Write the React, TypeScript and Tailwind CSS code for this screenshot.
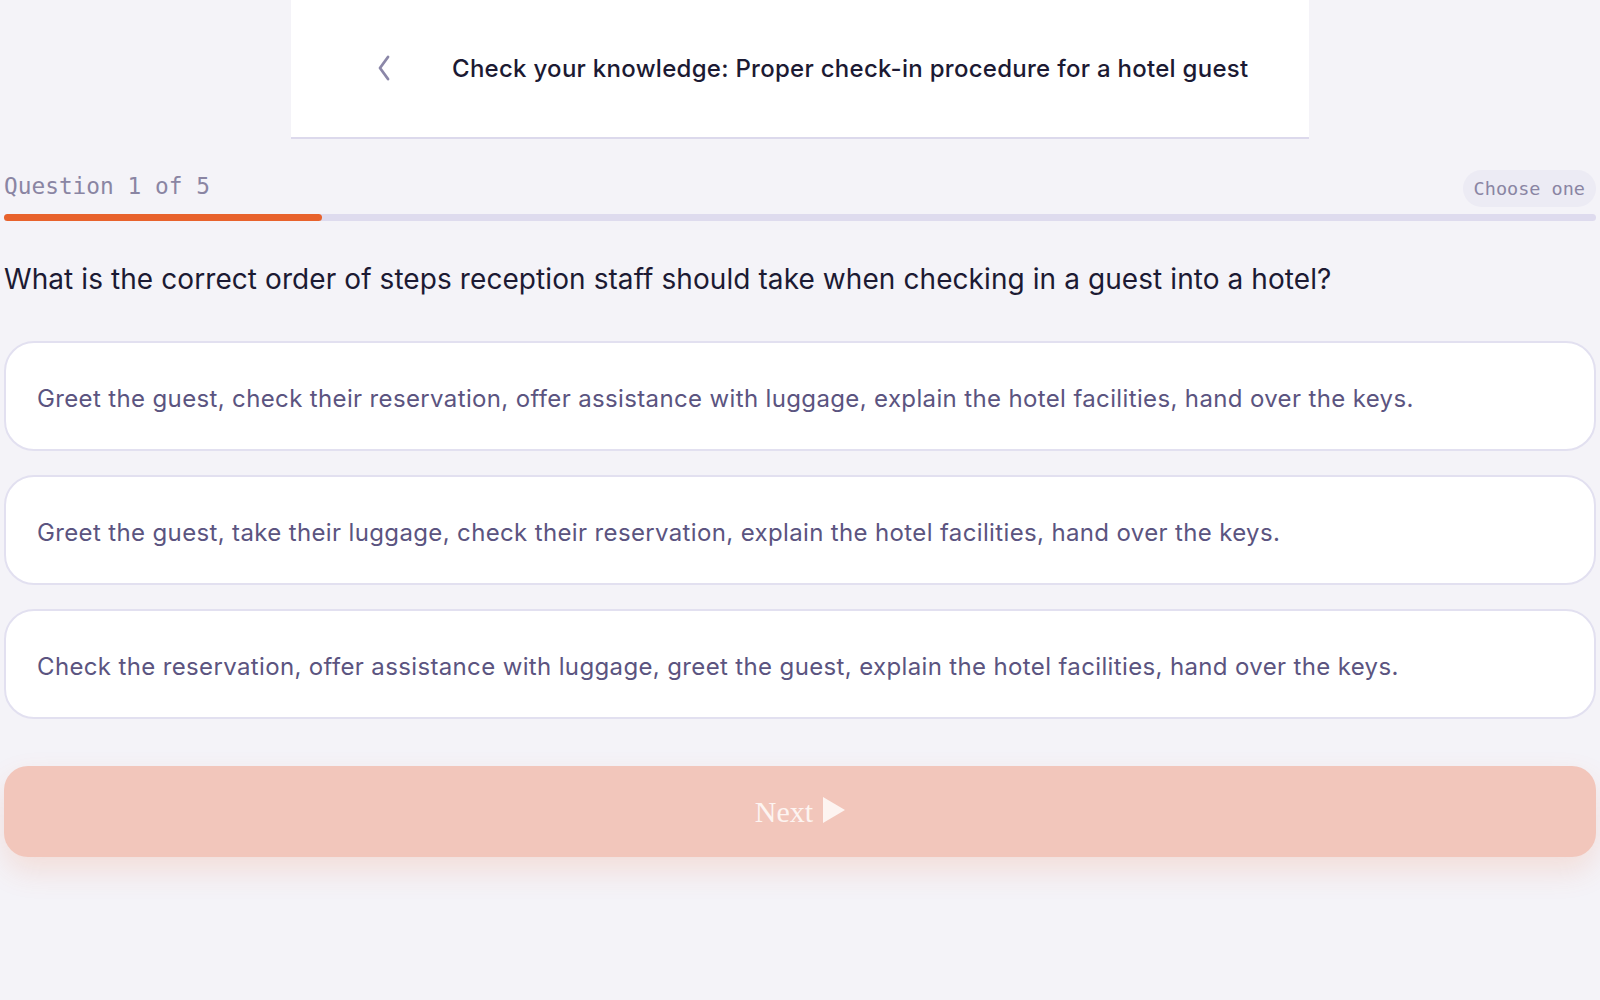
import React from "react"

const options = [
    "Greet the guest, check their reservation, offer assistance with luggage, explain the hotel facilities, hand over the keys.",
    "Greet the guest, take their luggage, check their reservation, explain the hotel facilities, hand over the keys.",
    "Check the reservation, offer assistance with luggage, greet the guest, explain the hotel facilities, hand over the keys.",
]

export default function App() {
    const current = 1
    const total = 5
    return (
        <div className="min-h-screen w-full bg-[#f4f3f8] font-['Inter','Noto_Sans',sans-serif]">
            {/* Header */}
            <div className="mx-auto flex h-[139px] w-[1018px] items-center border-b-2 border-[#dcd9ec] bg-white pl-[86px]">
                <svg width="14" height="26" viewBox="0 0 14 26" fill="none" className="-mt-[1px] text-[#8b87a8]">
                    <polyline points="11,2 3,13 11,24" stroke="currentColor" strokeWidth="2.8" strokeLinecap="round" strokeLinejoin="round" />
                </svg>
                <h1 className="ml-[61px] text-[24px] font-medium tracking-[0.28px] text-[#1c1a33]">
                    Check your knowledge: Proper check-in procedure for a hotel guest
                </h1>
            </div>

            <div className="px-1">
                {/* Progress */}
                <div className="mt-[31px] flex h-[37px] items-center justify-between">
                    <span className="-mt-[4px] font-['DejaVu_Sans_Mono',monospace] text-[22.8px] text-[#8a85a3]">
                        Question {current} of {total}
                    </span>
                    <span className="rounded-full bg-[#ecebf4] px-[11px] py-[5px] font-['DejaVu_Sans_Mono',monospace] text-[18.5px] text-[#8a85a3]">
                        Choose one
                    </span>
                </div>
                <div className="mt-[7px] h-[7px] w-full rounded-full bg-[#dedbee]">
                    <div className="h-full rounded-full bg-[#e8622c]" style={{ width: `${(current / total) * 100}%` }} />
                </div>

                {/* Question */}
                <h2 className="mt-[40px] text-[28px] leading-[36px] tracking-[0.08px] text-[#1c1a33]">
                    What is the correct order of steps reception staff should take when checking in a guest into a hotel?
                </h2>

                <div className="mt-[44px] flex flex-col gap-[24px]">
                    {options.map((o) => (
                        <button
                            key={o}
                            className="flex h-[110px] w-full items-center rounded-[30px] border-2 border-[#e2e0f0] bg-white px-[31px] pt-[5px] text-left text-[24px] tracking-[0.36px] text-[#5b5480]"
                        >
                            {o}
                        </button>
                    ))}
                </div>

                <button className="mt-[47px] flex h-[91px] w-full items-center justify-center gap-[10px] rounded-[24px] bg-[#f2c6bb] shadow-[0_14px_30px_rgba(232,98,44,0.15)]">
                    <span className="font-['Liberation_Serif',serif] text-[30px] text-[#fdf4f1]">Next</span>
                    <svg width="22" height="26" viewBox="0 0 22 26" className="-mt-[4px]">
                        <polygon points="0,0 22,13 0,26" fill="#fdf4f1" />
                    </svg>
                </button>
            </div>
        </div>
    )
}
